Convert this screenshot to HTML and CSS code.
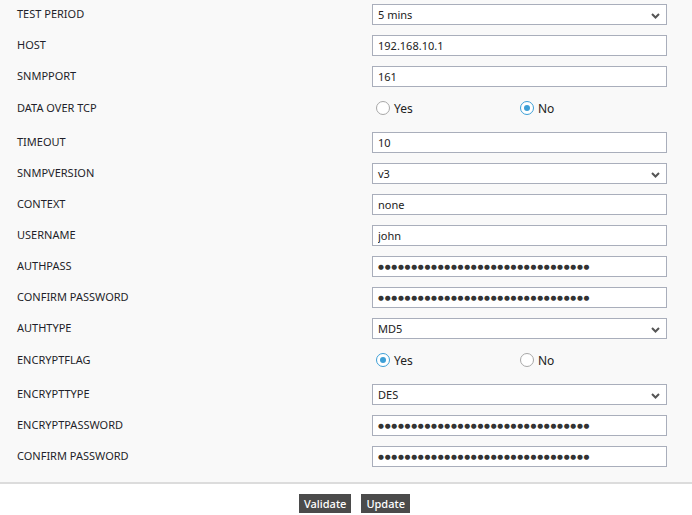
FILE: index.html
```html
<!DOCTYPE html>
<html>
<head>
<meta charset="utf-8">
<link rel="stylesheet" href="styles.css">
</head>
<body>
<div class="form">
  <div class="row"><label>TEST PERIOD</label><div class="select"><span>5 mins</span><svg class="chev" width="9" height="6" viewBox="0 0 9 6"><path d="M1 1 L4.5 4.5 L8 1" fill="none" stroke="#555" stroke-width="2"/></svg></div></div>
  <div class="row"><label>HOST</label><input class="field" type="text" value="192.168.10.1"></div>
  <div class="row"><label>SNMPPORT</label><input class="field" type="text" value="161"></div>
  <div class="row radio-row"><label>DATA OVER TCP</label><div class="radios"><label class="opt"><input type="radio" name="tcp"><span>Yes</span></label><label class="opt"><input type="radio" name="tcp" checked><span>No</span></label></div></div>
  <div class="row"><label>TIMEOUT</label><input class="field" type="text" value="10"></div>
  <div class="row"><label>SNMPVERSION</label><div class="select"><span>v3</span><svg class="chev" width="9" height="6" viewBox="0 0 9 6"><path d="M1 1 L4.5 4.5 L8 1" fill="none" stroke="#555" stroke-width="2"/></svg></div></div>
  <div class="row"><label>CONTEXT</label><input class="field" type="text" value="none"></div>
  <div class="row"><label>USERNAME</label><input class="field" type="text" value="john"></div>
  <div class="row"><label>AUTHPASS</label><div class="field pass">●●●●●●●●●●●●●●●●●●●●●●●●●●●●●●●●</div></div>
  <div class="row"><label>CONFIRM PASSWORD</label><div class="field pass">●●●●●●●●●●●●●●●●●●●●●●●●●●●●●●●●</div></div>
  <div class="row"><label>AUTHTYPE</label><div class="select"><span>MD5</span><svg class="chev" width="9" height="6" viewBox="0 0 9 6"><path d="M1 1 L4.5 4.5 L8 1" fill="none" stroke="#555" stroke-width="2"/></svg></div></div>
  <div class="row radio-row"><label>ENCRYPTFLAG</label><div class="radios"><label class="opt"><input type="radio" name="enc" checked><span>Yes</span></label><label class="opt"><input type="radio" name="enc"><span>No</span></label></div></div>
  <div class="row"><label>ENCRYPTTYPE</label><div class="select"><span>DES</span><svg class="chev" width="9" height="6" viewBox="0 0 9 6"><path d="M1 1 L4.5 4.5 L8 1" fill="none" stroke="#555" stroke-width="2"/></svg></div></div>
  <div class="row"><label>ENCRYPTPASSWORD</label><div class="field pass">●●●●●●●●●●●●●●●●●●●●●●●●●●●●●●●●</div></div>
  <div class="row"><label>CONFIRM PASSWORD</label><div class="field pass">●●●●●●●●●●●●●●●●●●●●●●●●●●●●●●●●</div></div>
</div>
<div class="footer">
  <button class="btn">Validate</button>
  <button class="btn">Update</button>
</div>
</body>
</html>
```
FILE: styles.css
```css
html, body {
  margin: 0;
  padding: 0;
  background: #ffffff;
  font-family: "Noto Sans", "Open Sans", sans-serif;
  font-size: 11px;
  color: #222;
}
.form {
  background: #f9f9f9;
  padding: 4px 0 15px 17px;
  border-bottom: 2px solid #dcdcdc;
}
.row {
  display: grid;
  grid-template-columns: 355px 295px;
  align-items: center;
  height: 21px;
  margin-bottom: 10px;
}
.row:last-child {
  margin-bottom: 0;
}
.row > label {
  color: #1f1f2a;
  font-size: 11px;
  padding-bottom: 2px;
}
.radio-row {
  height: 22px;
  padding-bottom: 3px;
}
.field, .select {
  box-sizing: border-box;
  width: 295px;
  height: 21px;
  border: 1px solid #a9aebb;
  background: #fff;
  font-family: "Noto Sans", sans-serif;
  font-size: 11px;
  color: #222;
  padding: 0 5px;
  margin: 0;
  outline: none;
  border-radius: 0;
}
.select {
  position: relative;
  display: flex;
  align-items: center;
}
.chev {
  position: absolute;
  right: 6px;
  top: 8px;
}
.pass {
  display: flex;
  align-items: center;
  font-family: "DejaVu Sans", sans-serif;
  font-size: 6.8px;
  letter-spacing: 0.7px;
  color: #333;
  overflow: hidden;
  white-space: nowrap;
}
.radios {
  display: grid;
  grid-template-columns: 144px 144px;
  padding-left: 4px;
}
.opt {
  display: flex;
  align-items: center;
  gap: 4px;
  font-size: 12px;
  color: #222;
}
.opt input {
  appearance: none;
  -webkit-appearance: none;
  width: 14px;
  height: 14px;
  margin: 0;
  border: 1px solid #a8a8a8;
  border-radius: 50%;
  background: #fff;
  box-sizing: border-box;
  position: relative;
}
.opt input:checked {
  border-color: #3d9fd6;
}
.opt input:checked::after {
  content: "";
  position: absolute;
  left: 3px;
  top: 3px;
  width: 6px;
  height: 6px;
  border-radius: 50%;
  background: #3d9fd6;
}
.footer {
  display: flex;
  justify-content: center;
  gap: 10px;
  padding: 10px 0 0 17px;
}
.btn {
  background: #4b4b4b;
  color: #fff;
  border: none;
  height: 19px;
  padding: 0 5px;
  font-family: "Noto Sans", sans-serif;
  font-size: 11px;
  font-weight: 500;
  line-height: 19px;
  border-radius: 0;
}
```
